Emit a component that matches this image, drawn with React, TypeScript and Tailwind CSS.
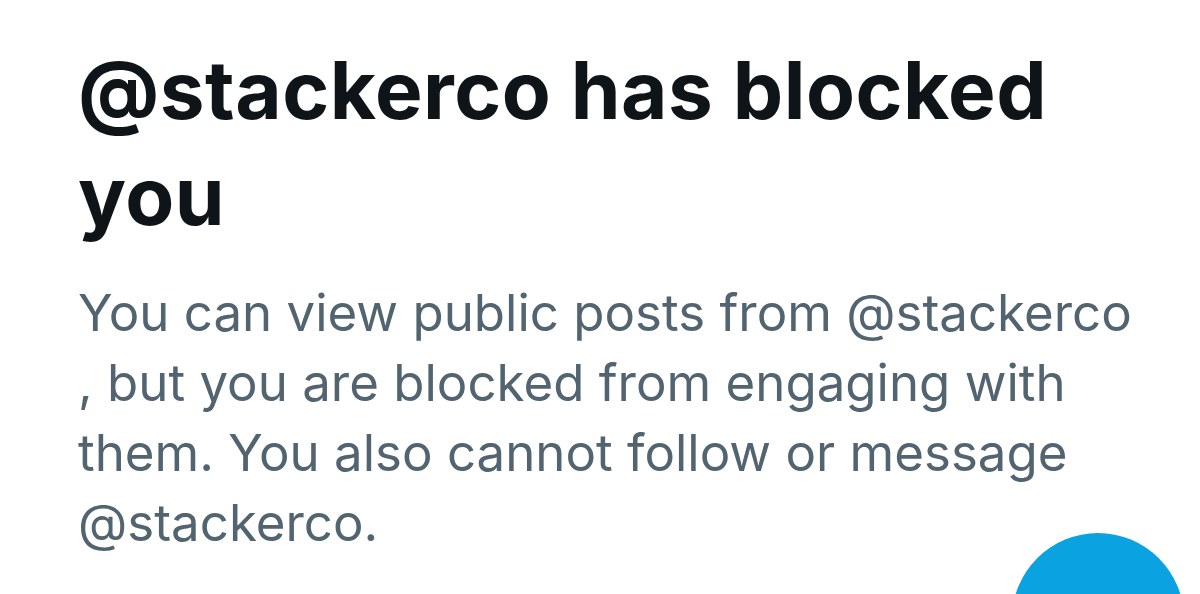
export default function App() {
  return (
    <div className="relative w-[1200px] h-[594px] overflow-hidden bg-white font-['Inter',sans-serif]">
      <div className="pl-[78px] pt-[37px]">
        <h1 className="text-[80px] leading-[106px] font-bold tracking-[0.5px] text-[#0f1419]">
          @stackerco has blocked
          <br />
          you
        </h1>
        <p className="mt-[29px] text-[51px] leading-[70px] text-[#536471] whitespace-nowrap">
          You can view public posts from @stackerco
          <br />
          , but you are blocked from engaging with
          <br />
          them. You also cannot follow or message
          <br />
          @stackerco.
        </p>
      </div>
      <div className="absolute left-[1012px] top-[533px] w-[172px] h-[172px] rounded-full bg-[#0ba2e2]" />
    </div>
  );
}
